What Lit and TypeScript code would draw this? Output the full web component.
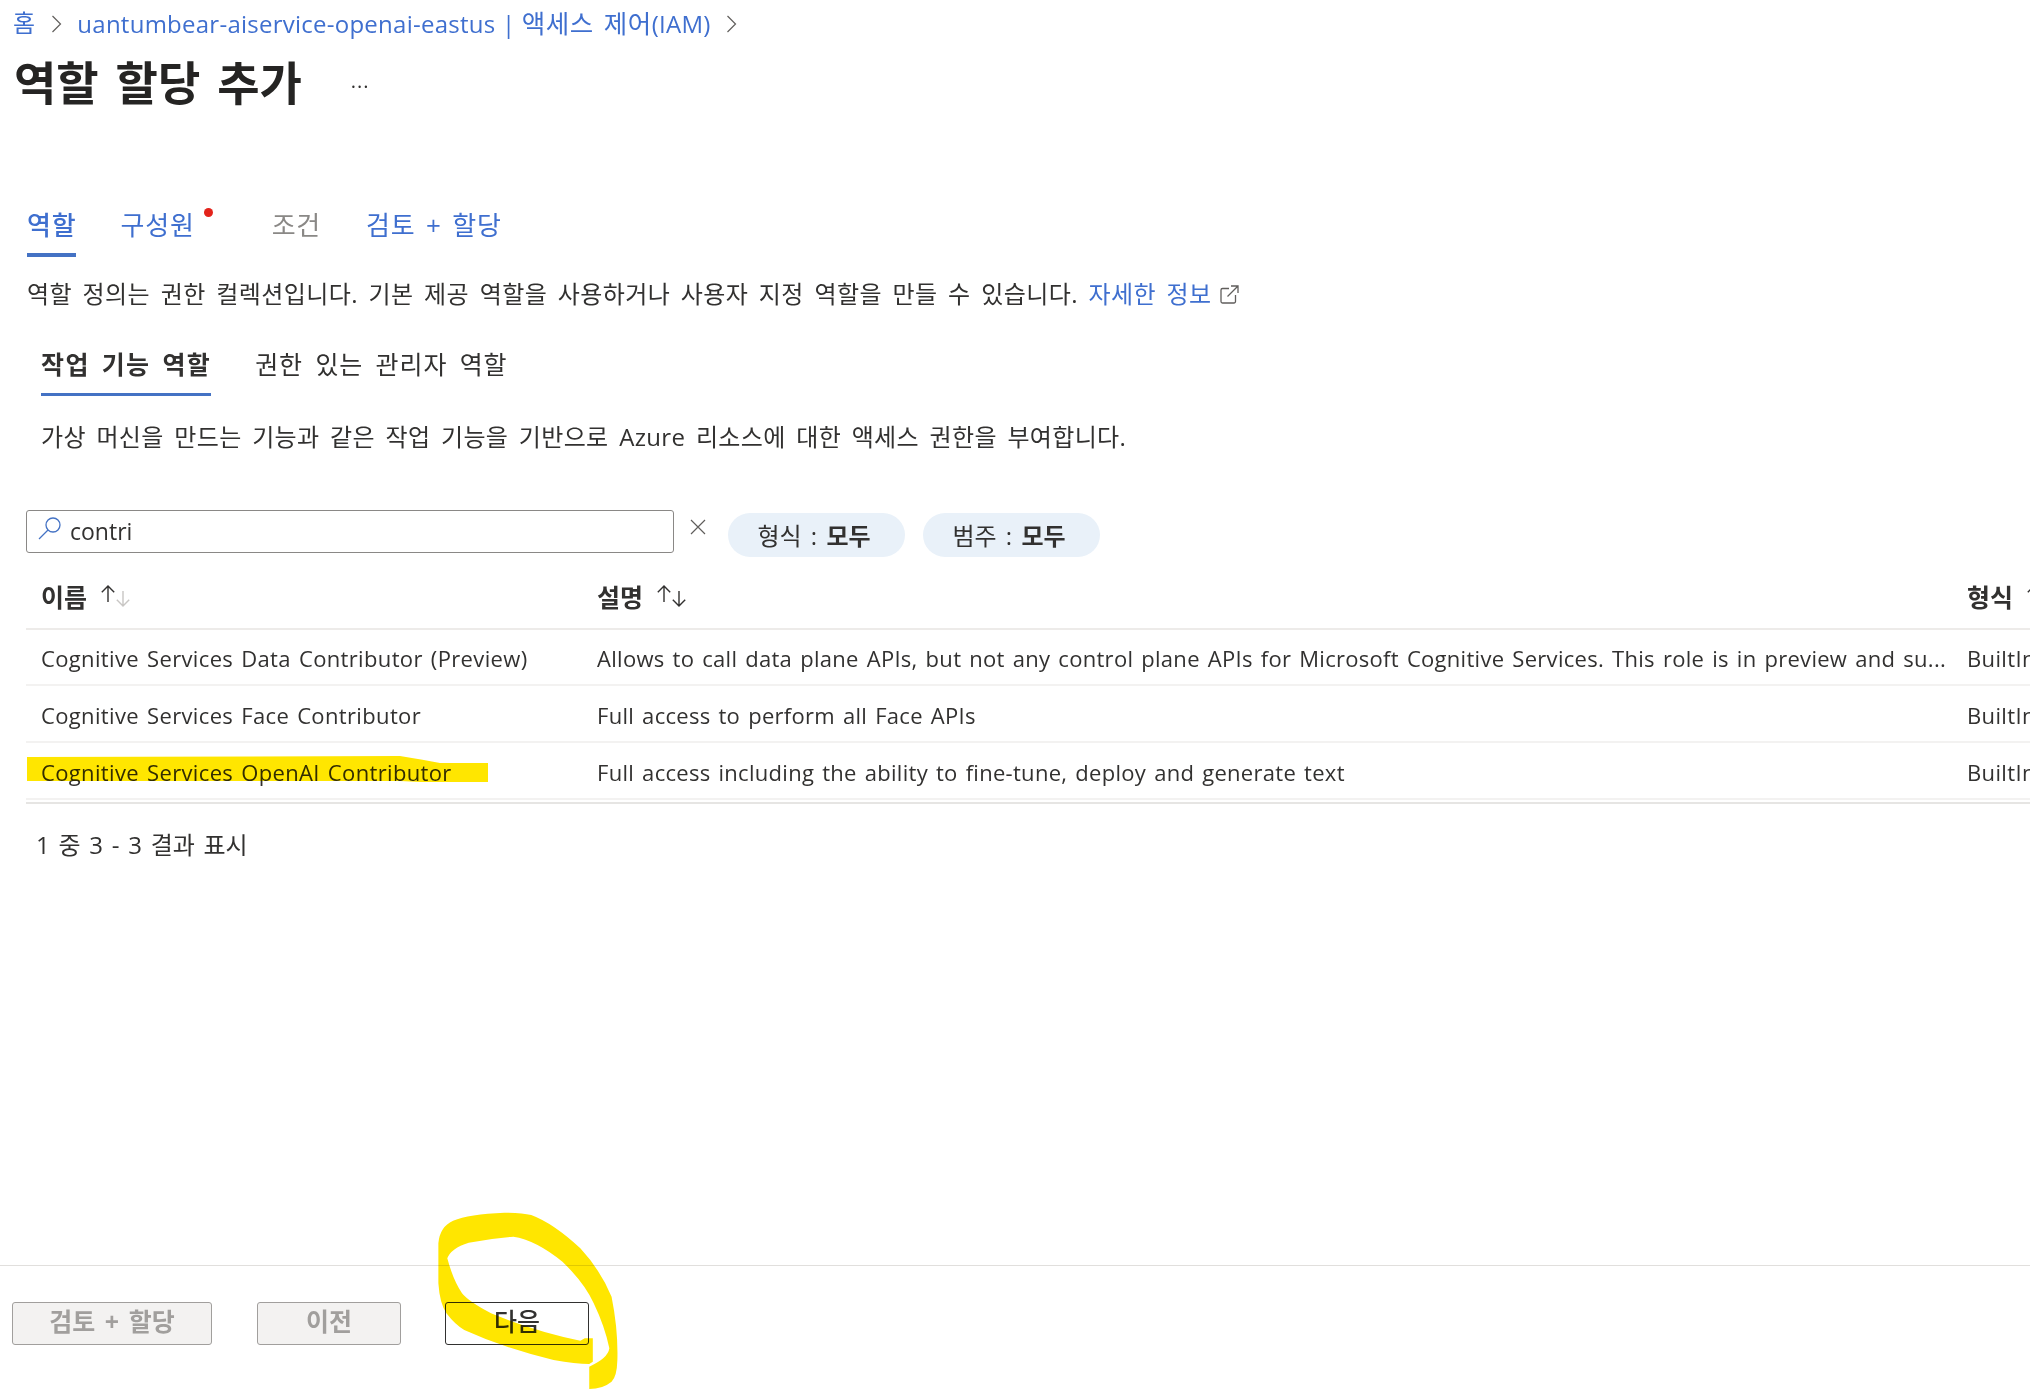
import { LitElement, html, css } from "lit";
import { customElement } from "lit/decorators.js";

const sortIcon = (upDark: boolean, downDark: boolean) => html`<svg class="sort" width="30" height="24" viewBox="0 0 30 24">
  <path d="M7 18V2M.8 8.2 7 2l6.2 6.2" fill="none" stroke=${upDark ? "#323130" : "#c8c6c4"} stroke-width="1.4"/>
  <path d="M22 7v15M15.8 15.8 22 22l6.2-6.2" fill="none" stroke=${downDark ? "#323130" : "#c8c6c4"} stroke-width="1.4"/>
</svg>`;

const chevron = html`<svg class="chev" width="11" height="18" viewBox="0 0 11 18"><path d="M1.5 1 9.5 9l-8 8" fill="none" stroke="#605e5c" stroke-width="1.2"/></svg>`;

const rows = [
  ["Cognitive Services Data Contributor (Preview)", "Allows to call data plane APIs, but not any control plane APIs for Microsoft Cognitive Services. This role is in preview and su...", "BuiltInRole"],
  ["Cognitive Services Face Contributor", "Full access to perform all Face APIs", "BuiltInRole"],
  ["Cognitive Services OpenAI Contributor", "Full access including the ability to fine-tune, deploy and generate text", "BuiltInRole"],
];

@customElement("app-root")
export class AppRoot extends LitElement {
  static styles = css`
    :host {
      display: block;
      position: relative;
      width: 2030px;
      height: 1390px;
      overflow: hidden;
      background: #fff;
      color: #323130;
      font-family: "Open Sans", "Noto Sans CJK KR", sans-serif;
      font-size: 22px;
    }
    .page { display: flex; flex-direction: column; height: 1390px; }
    a { color: #3f6fcf; text-decoration: none; }
    .crumbs { display: flex; align-items: center; gap: 15.5px; box-sizing: border-box; height: 46px; padding: 0 0 4px 13px; font-size: 24px; letter-spacing: .25px; color: #3f6fcf; white-space: nowrap; }
    .crumbs .ko { font-size: 25.5px; letter-spacing: .5px; word-spacing: 3px; }
    .chev { flex: none; margin-top: 6px; }
    .title { display: flex; align-items: center; height: 72px; padding-left: 14px; }
    .title h1 { margin: 0; font-size: 46px; font-weight: 700; word-spacing: 5px; line-height: 72px; color: #252423; }
    .more { margin-left: 49px; font-size: 20px; letter-spacing: 1px; margin-top: -4px; color: #323130; }
    .tabs { display: flex; margin: 77px 0 0 27px; height: 62px; font-size: 26px; letter-spacing: .8px; }
    .tab { position: relative; box-sizing: border-box; height: 62px; line-height: 60px; color: #3f6fcf; white-space: nowrap; word-spacing: 3px; }
    .tab.on { font-weight: 500; border-bottom: 4px solid #4472c4; }
    .tab.off { color: #8a8886; }
    .dot { position: absolute; right: -18px; top: 13px; width: 9px; height: 9px; border-radius: 50%; background: #e3231b; }
    .intro { margin: 21px 0 0 27px; height: 32px; line-height: 32px; font-size: 24px; letter-spacing: .4px; word-spacing: 4px; display: flex; align-items: center; white-space: pre; }
    .intro svg { margin-left: 8px; flex: none; }
    .subtabs { display: flex; gap: 44px; margin: 31px 0 0 41px; height: 55px; font-size: 25px; letter-spacing: .9px; word-spacing: 5px; }
    .sub { line-height: 46px; white-space: nowrap; box-sizing: border-box; height: 55px; }
    .sub.on { font-weight: 700; border-bottom: 3px solid #4472c4; word-spacing: 4px; letter-spacing: 1.4px; }
    .info { margin: 25px 0 0 41px; height: 32px; line-height: 32px; font-size: 24px; letter-spacing: .35px; word-spacing: 4px; white-space: nowrap; }
    .filters { display: flex; margin: 57px 0 0 26px; height: 47px; }
    .search { box-sizing: border-box; width: 648px; height: 43px; border: 1px solid #8a8886; border-radius: 3px; display: flex; align-items: center; padding: 0 0 2px 9px; gap: 8px; font-size: 23px; }
    .search svg { flex: none; margin-top: -4px; }
    .clear { margin: 9px 22px 0 16px; flex: none; }
    .pill { box-sizing: border-box; width: 177px; height: 44px; margin: 3px 18px 0 0; padding: 0 5px 2px 0; border-radius: 22px; background: #e9f1f9; display: flex; align-items: center; justify-content: center; white-space: pre; font-size: 24px; word-spacing: 3px; }
    .pill b { font-weight: 700; }
    .grid { display: grid; grid-template-columns: 556px 1370px 1fr; width: 2004px; margin-left: 26px; }
    .cell { box-sizing: border-box; padding: 2px 0 0 15px; white-space: nowrap; overflow: hidden; display: flex; align-items: center; border-bottom: 2px solid #f3f2f1; height: 57px; letter-spacing: .35px; word-spacing: 2px; }
    .cell.desc { letter-spacing: .29px; }
    .cell.first { height: 56px; }
    .cell.h { height: 73px; font-weight: 700; font-size: 25px; letter-spacing: 0; border-bottom: 2px solid #edebe9; gap: 14px; padding-top: 6px; }
    .sort { flex: none; }
    .rule { height: 2px; margin: 2px 0 0 26px; background: #e6e5e3; }
    .count { margin: 25px 0 0 36px; height: 32px; line-height: 32px; font-size: 24px; word-spacing: 2.500px; }
    .spacer { flex: 1; }
    .footer { height: 125px; box-sizing: border-box; border-top: 1px solid #e1dfdd; display: flex; padding: 36px 0 0 12px; }
    .btn { box-sizing: border-box; height: 43px; border: 1px solid #a19f9d; border-radius: 3px; background: #f3f2f1; color: #a19f9d; font-size: 25px; font-weight: 700; word-spacing: 3px; display: flex; align-items: center; justify-content: center; padding-bottom: 8px; }
    .btn.a { width: 200px; margin-right: 45px; }
    .btn.b { width: 144px; margin-right: 44px; }
    .btn.c { width: 144px; background: transparent; border-color: #323130; color: #323130; font-weight: 500; }
    .marker { position: absolute; left: 0; top: 0; mix-blend-mode: multiply; pointer-events: none; }
  `;

  render() {
    return html`
      <div class="page">
        <nav class="crumbs">
          <span>홈</span>
          ${chevron}
          <span>uantumbear-aiservice-openai-eastus | <span class="ko">액세스 제어</span>(IAM)</span>
          ${chevron}
        </nav>
        <div class="title"><h1>역할 할당 추가</h1><span class="more">...</span></div>
        <div class="tabs">
          <div class="tab on" style="margin-right:44px">역할</div>
          <div class="tab" style="margin-right:77px">구성원<i class="dot"></i></div>
          <div class="tab off" style="margin-right:45px">조건</div>
          <div class="tab">검토 + 할당</div>
        </div>
        <div class="intro"><span>역할 정의는 권한 컬렉션입니다. 기본 제공 역할을 사용하거나 사용자 지정 역할을 만들 수 있습니다. </span><a href="#">자세한 정보</a>
          <svg width="19" height="19" viewBox="0 0 19 19"><path d="M9 3.500H2.500a1.500 1.500 0 0 0-1.500 1.500v11.500A1.500 1.500 0 0 0 2.500 18H14a1.500 1.500 0 0 0 1.500-1.500V10M11 1h7v7M18 1 7.500 11.500" fill="none" stroke="#605e5c" stroke-width="1.300"/></svg>
        </div>
        <div class="subtabs">
          <div class="sub on">작업 기능 역할</div>
          <div class="sub">권한 있는 관리자 역할</div>
        </div>
        <div class="info">가상 머신을 만드는 기능과 같은 작업 기능을 기반으로 Azure 리소스에 대한 액세스 권한을 부여합니다.</div>
        <div class="filters">
          <div class="search">
            <svg width="26" height="26" viewBox="0 0 26 26"><circle cx="17" cy="9" r="7" fill="none" stroke="#4472c4" stroke-width="1.300"/><path d="M12 14 3 23" fill="none" stroke="#4472c4" stroke-width="1.300"/></svg>
            <span>contri</span>
          </div>
          <svg class="clear" width="16" height="16" viewBox="0 0 16 16"><path d="M1 1l14 14M15 1 1 15" stroke="#605e5c" stroke-width="1.200"/></svg>
          <div class="pill">형식 : <b>모두</b></div>
          <div class="pill">범주 : <b>모두</b></div>
        </div>
        <div class="grid">
          <div class="cell h">이름 ${sortIcon(true, false)}</div>
          <div class="cell h">설명 ${sortIcon(true, true)}</div>
          <div class="cell h">형식 ${sortIcon(true, false)}</div>
          ${rows.map((r, i) => html`
            <div class="cell ${i === 0 ? "first" : ""}">${r[0]}</div>
            <div class="cell desc ${i === 0 ? "first" : ""}">${r[1]}</div>
            <div class="cell ${i === 0 ? "first" : ""}">${r[2]}</div>
          `)}
        </div>
        <div class="rule"></div>
        <div class="count">1 중 3 - 3 결과 표시</div>
        <div class="spacer"></div>
        <footer class="footer">
          <div class="btn a">검토 + 할당</div>
          <div class="btn b">이전</div>
          <div class="btn c">다음</div>
        </footer>
      </div>
      <svg class="marker" width="2030" height="1390" viewBox="0 0 2030 1390">
        <path fill="#ffe600" d="M27 757L400 756Q425 760 440 763H488V782H420L400 781H27Z"/>
        <g transform="translate(0,1190) scale(0.4464,0.3333)">
          <path fill="#ffe600" d="M1320 597Q1350 597 1370 575Q1382 560 1383 510Q1385 420 1370 320Q1345 240 1300 175Q1240 100 1190 75Q1170 68 1130 68Q1050 72 1015 92Q985 110 982 160L982 280Q985 340 1000 370Q1020 405 1040 420Q1130 475 1240 510Q1290 522 1320 522L1328 515V445H1310L1300 452Q1200 425 1100 370Q1050 335 1035 310Q1015 270 1002 205Q1010 175 1050 158Q1100 145 1150 140Q1200 150 1260 215Q1310 280 1330 340Q1355 410 1365 475Q1362 505 1320 530Z"/>
        </g>
      </svg>
    `;
  }
}
